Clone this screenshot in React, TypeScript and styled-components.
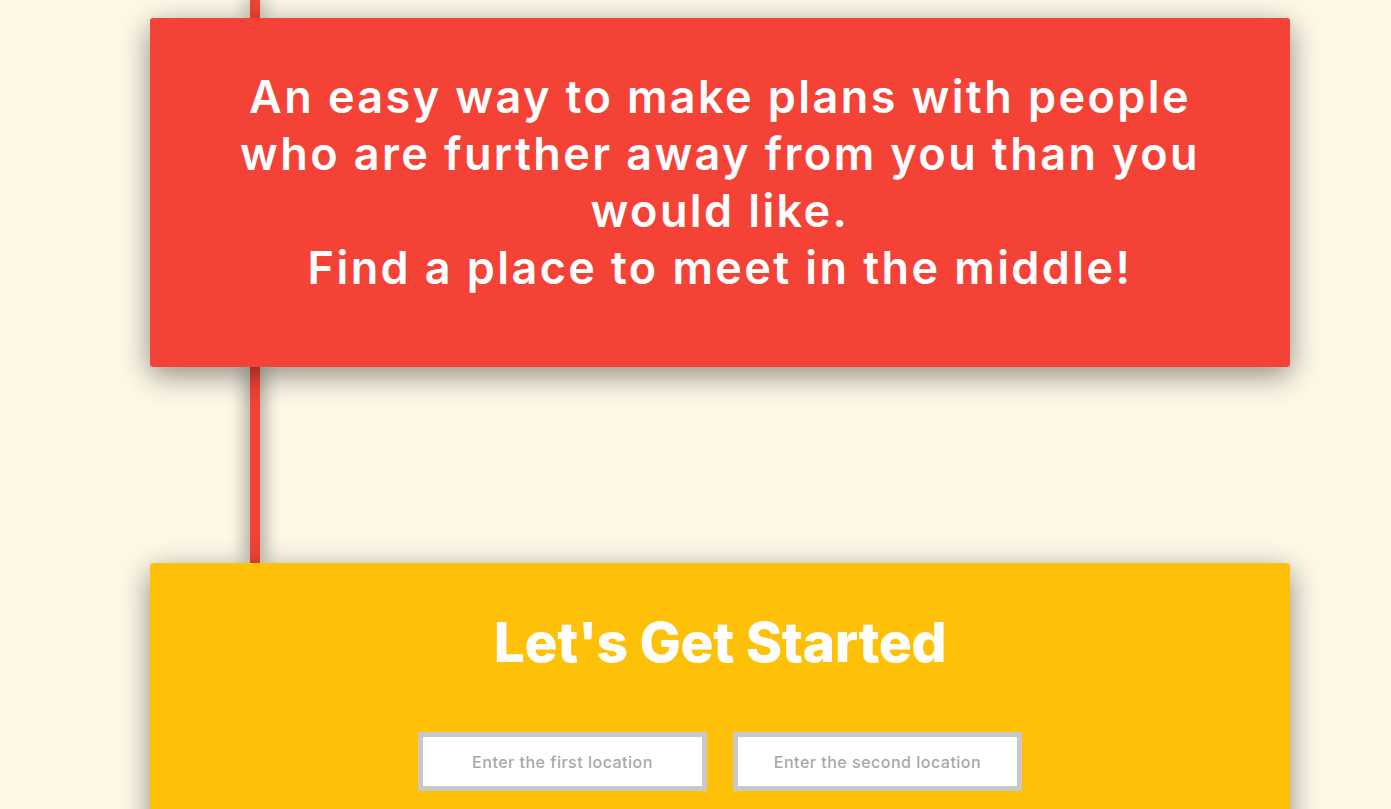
import React from "react";
import styled, { createGlobalStyle } from "styled-components";

const GlobalStyle = createGlobalStyle`
  html, body {
    margin: 0;
    padding: 0;
    background: #fef8e7;
    overflow: hidden;
  }
  body {
    font-family: Inter, "Open Sans", "Liberation Sans", sans-serif;
  }
  * { box-sizing: border-box; }
`;

const Page = styled.main`
  width: 1391px;
  height: 809px;
  padding-left: 150px;
  overflow: hidden;
`;

const Timeline = styled.div`
  width: 1140px;
  display: flex;
  flex-direction: column;
`;

const Connector = styled.div<{ $height: number }>`
  position: relative;
  z-index: 0;
  width: 10px;
  height: ${(p) => p.$height}px;
  margin-left: 100px;
  background: #f44336;
  box-shadow: 0 0 20px rgba(0, 0, 0, 0.65);
`;

const Card = styled.section<{ $bg: string }>`
  position: relative;
  z-index: 1;
  background: ${(p) => p.$bg};
  border-radius: 3px;
  box-shadow: 0 8px 30px rgba(0, 0, 0, 0.45);
  color: #fff;
  text-align: center;
`;

const IntroCard = styled(Card)`
  height: 349px;
  padding: 50px 85px 0;
`;

const Tagline = styled.p`
  margin: 0;
  font-size: 45px;
  line-height: 57px;
  font-weight: 600;
  letter-spacing: 2.4px;
`;

const StartCard = styled(Card)`
  padding: 46px 80px 60px;
`;

const Heading = styled.h2`
  margin: 0;
  font-size: 55px;
  line-height: 66px;
  font-weight: 800;
  letter-spacing: -0.3px;
`;

const InputRow = styled.div`
  display: flex;
  justify-content: center;
  gap: 26px;
  margin-top: 57px;
`;

const LocationInput = styled.input`
  width: 289px;
  height: 59px;
  border: 5px solid #c8c8c8;
  background: #fff;
  text-align: center;
  font-family: Inter, "Open Sans", sans-serif;
  font-size: 16px;
  font-weight: 500;
  letter-spacing: 0.5px;
  color: #555;
  outline: none;
  &::placeholder {
    color: #a8a8a8;
  }
`;

export default function App() {
  return (
    <>
      <GlobalStyle />
      <Page>
        <Timeline>
          <Connector $height={18} />
          <IntroCard $bg="#f44336">
            <Tagline>
              An easy way to make plans with people who are further away from
              you than you would like.
              <br />
              Find a place to meet in the middle!
            </Tagline>
          </IntroCard>
          <Connector $height={196} />
          <StartCard $bg="#ffc107">
            <Heading>Let's Get Started</Heading>
            <InputRow>
              <LocationInput placeholder="Enter the first location" />
              <LocationInput placeholder="Enter the second location" />
            </InputRow>
          </StartCard>
        </Timeline>
      </Page>
    </>
  );
}
